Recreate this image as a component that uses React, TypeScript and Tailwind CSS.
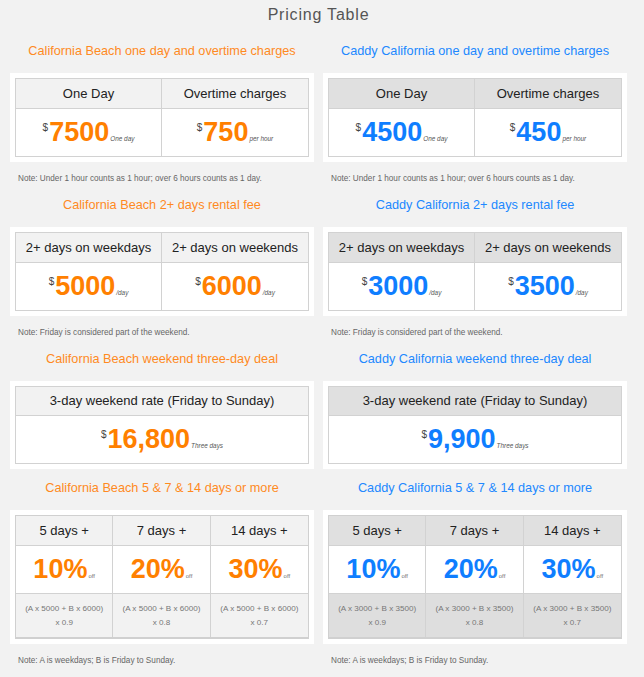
import React from "react";

type Theme = {
  heading: string;
  num: string;
  head: string;
  foot: string;
};

const orange: Theme = {
  heading: "text-[#ff8a1f]",
  num: "text-[#ff8000]",
  head: "bg-[#f2f2f2]",
  foot: "bg-[#f2f2f2]",
};
const blue: Theme = {
  heading: "text-[#2188ff]",
  num: "text-[#0f7eff]",
  head: "bg-[#e0e0e0]",
  foot: "bg-[#dedede]",
};

function Price({ value, unit, theme }: { value: string; unit: string; theme: Theme }) {
  return (
    <div className="flex items-baseline justify-center">
      <span className="relative -top-[10px] text-[10px] leading-none text-[#444]">$</span>
      <span className={`ml-[1px] text-[27px] font-bold leading-none ${theme.num}`}>{value}</span>
      <span className="ml-[1px] text-[6.4px] italic leading-none text-[#555]">{unit}</span>
    </div>
  );
}

function Pct({ value, theme }: { value: string; theme: Theme }) {
  return (
    <div className="flex items-baseline justify-center">
      <span className={`text-[27px] font-bold leading-none ${theme.num}`}>{value}</span>
      <span className="ml-[1px] text-[6px] leading-none text-[#777]">off</span>
    </div>
  );
}

function Heading({ text, theme }: { text: string; theme: Theme }) {
  return (
    <div className={`h-[20px] text-center text-[12.7px] leading-[20px] ${theme.heading}`}>{text}</div>
  );
}

function Note({ text }: { text: string }) {
  return (
    <div className="mt-[11px] h-[12px] pl-[8px] text-[8.2px] leading-[12px] text-[#666]">{text}</div>
  );
}

function TwoCol({
  theme,
  heads,
  prices,
}: {
  theme: Theme;
  heads: string[];
  prices: { value: string; unit: string }[];
}) {
  return (
    <div className="mt-[12px] bg-white p-[5px]">
      <div className="border border-[#d2d2d2]">
        <div className={`grid grid-cols-2 border-b border-[#d2d2d2] ${theme.head}`}>
          {heads.map((h, i) => (
            <div
              key={h}
              className={`flex h-[29px] items-center justify-center text-[13px] text-[#222] ${
                i === 0 ? "border-r border-[#d2d2d2]" : ""
              }`}
            >
              {h}
            </div>
          ))}
        </div>
        <div className="grid grid-cols-2 bg-white">
          {prices.map((p, i) => (
            <div
              key={p.value}
              className={`flex h-[47px] items-center justify-center ${
                i === 0 ? "border-r border-[#d2d2d2]" : ""
              }`}
            >
              <Price value={p.value} unit={p.unit} theme={theme} />
            </div>
          ))}
        </div>
      </div>
    </div>
  );
}

function OneCol({ theme, head, value }: { theme: Theme; head: string; value: string }) {
  return (
    <div className="mt-[12px] bg-white p-[5px]">
      <div className="border border-[#d2d2d2]">
        <div
          className={`flex h-[29px] items-center justify-center border-b border-[#d2d2d2] text-[13px] text-[#222] ${theme.head}`}
        >
          {head}
        </div>
        <div className="flex h-[47px] items-center justify-center bg-white">
          <Price value={value} unit="Three days" theme={theme} />
        </div>
      </div>
    </div>
  );
}

function ThreeCol({ theme, a, b }: { theme: Theme; a: string; b: string }) {
  const cols = [
    { head: "5 days +", pct: "10%", mul: "x 0.9" },
    { head: "7 days +", pct: "20%", mul: "x 0.8" },
    { head: "14 days +", pct: "30%", mul: "x 0.7" },
  ];
  return (
    <div className="mt-[12px] bg-white p-[5px]">
      <div className="border border-b-2 border-[#d0d0d0]">
        <div className={`grid grid-cols-3 border-b border-[#d2d2d2] ${theme.head}`}>
          {cols.map((c, i) => (
            <div
              key={c.head}
              className={`flex h-[29px] items-center justify-center text-[13px] text-[#222] ${
                i < 2 ? "border-r border-[#d2d2d2]" : ""
              }`}
            >
              {c.head}
            </div>
          ))}
        </div>
        <div className="grid grid-cols-3 border-b border-[#d2d2d2] bg-white">
          {cols.map((c, i) => (
            <div
              key={c.pct}
              className={`flex h-[47px] items-center justify-center ${
                i < 2 ? "border-r border-[#d2d2d2]" : ""
              }`}
            >
              <Pct value={c.pct} theme={theme} />
            </div>
          ))}
        </div>
        <div className={`grid grid-cols-3 ${theme.foot}`}>
          {cols.map((c, i) => (
            <div
              key={c.mul}
              className={`flex h-[43px] flex-col items-center justify-center text-[8.1px] leading-[14px] text-[#777] ${
                i < 2 ? "border-r border-[#d2d2d2]" : ""
              }`}
            >
              <div>{`(A x ${a} + B x ${b})`}</div>
              <div>{c.mul}</div>
            </div>
          ))}
        </div>
      </div>
    </div>
  );
}

function Row({ children }: { children: React.ReactNode }) {
  return <div className="grid grid-cols-[304px_304px] gap-x-[9px]">{children}</div>;
}

export default function App() {
  return (
    <div className="min-h-[677px] w-[644px] bg-[#f2f2f2] pl-[10px] font-['Liberation_Sans',Arial,sans-serif]">
      <div className="w-[617px] pt-[5px] text-center text-[16px] leading-[20px] tracking-[0.8px] text-[#555]">
        Pricing Table
      </div>

      <div className="mt-[16px]">
        <Row>
          <div>
            <Heading text="California Beach one day and overtime charges" theme={orange} />
            <TwoCol
              theme={orange}
              heads={["One Day", "Overtime charges"]}
              prices={[
                { value: "7500", unit: "One day" },
                { value: "750", unit: "per hour" },
              ]}
            />
            <Note text="Note: Under 1 hour counts as 1 hour; over 6 hours counts as 1 day." />
          </div>
          <div>
            <Heading text="Caddy California one day and overtime charges" theme={blue} />
            <TwoCol
              theme={blue}
              heads={["One Day", "Overtime charges"]}
              prices={[
                { value: "4500", unit: "One day" },
                { value: "450", unit: "per hour" },
              ]}
            />
            <Note text="Note: Under 1 hour counts as 1 hour; over 6 hours counts as 1 day." />
          </div>
        </Row>
      </div>

      <div className="mt-[10px]">
        <Row>
          <div>
            <Heading text="California Beach 2+ days rental fee" theme={orange} />
            <TwoCol
              theme={orange}
              heads={["2+ days on weekdays", "2+ days on weekends"]}
              prices={[
                { value: "5000", unit: "/day" },
                { value: "6000", unit: "/day" },
              ]}
            />
            <Note text="Note: Friday is considered part of the weekend." />
          </div>
          <div>
            <Heading text="Caddy California 2+ days rental fee" theme={blue} />
            <TwoCol
              theme={blue}
              heads={["2+ days on weekdays", "2+ days on weekends"]}
              prices={[
                { value: "3000", unit: "/day" },
                { value: "3500", unit: "/day" },
              ]}
            />
            <Note text="Note: Friday is considered part of the weekend." />
          </div>
        </Row>
      </div>

      <div className="mt-[10px]">
        <Row>
          <div>
            <Heading text="California Beach weekend three-day deal" theme={orange} />
            <OneCol theme={orange} head="3-day weekend rate (Friday to Sunday)" value="16,800" />
          </div>
          <div>
            <Heading text="Caddy California weekend three-day deal" theme={blue} />
            <OneCol theme={blue} head="3-day weekend rate (Friday to Sunday)" value="9,900" />
          </div>
        </Row>
      </div>

      <div className="mt-[9px]">
        <Row>
          <div>
            <Heading text="California Beach 5 & 7 & 14 days or more" theme={orange} />
            <ThreeCol theme={orange} a="5000" b="6000" />
            <Note text="Note: A is weekdays; B is Friday to Sunday." />
          </div>
          <div>
            <Heading text="Caddy California 5 & 7 & 14 days or more" theme={blue} />
            <ThreeCol theme={blue} a="3000" b="3500" />
            <Note text="Note: A is weekdays; B is Friday to Sunday." />
          </div>
        </Row>
      </div>
    </div>
  );
}
